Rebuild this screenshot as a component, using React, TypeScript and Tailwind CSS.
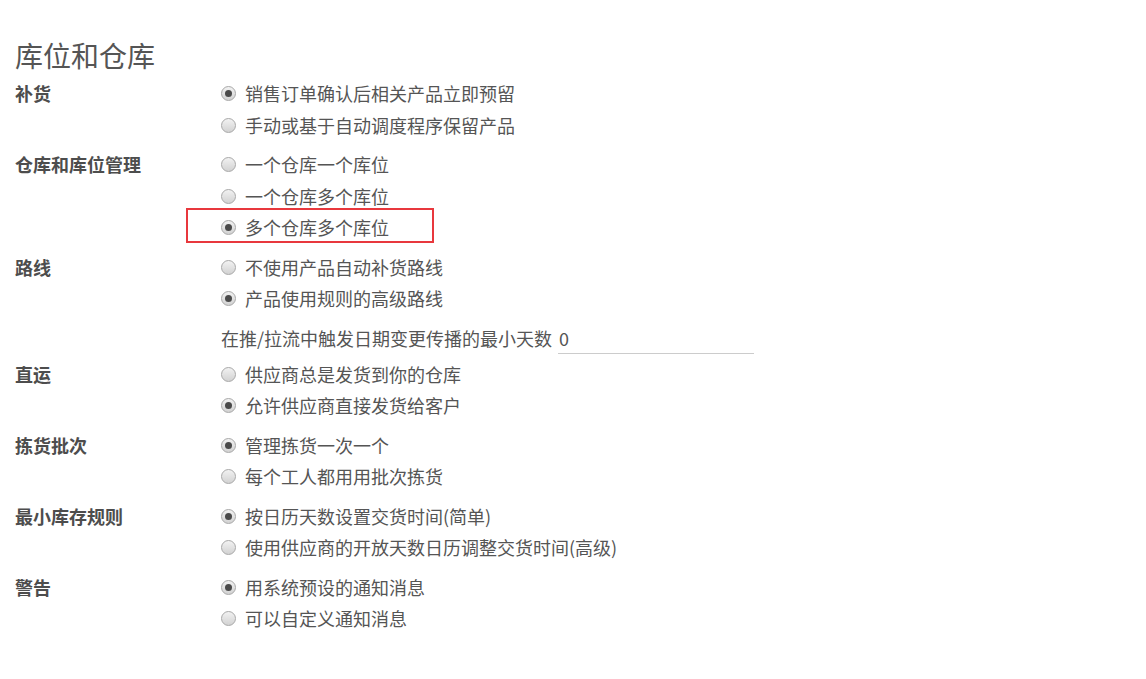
import React from "react";

const Radio = ({ checked }: { checked?: boolean }) => (
  <span className="relative inline-flex h-[15px] w-[15px] shrink-0 items-center justify-center rounded-full border border-[#a8a8a8] bg-gradient-to-b from-[#f2f2f2] to-[#d2d2d2]">
    {checked && <span className="h-[7px] w-[7px] rounded-full bg-[#4a4a4a]" />}
  </span>
);

const Option = ({ label, checked, boxed }: { label: string; checked?: boolean; boxed?: boolean }) => (
  <div className="relative flex h-[31.5px] items-center gap-[9px]">
    <Radio checked={checked} />
    <span>{label}</span>
    {boxed && (
      <div className="pointer-events-none absolute left-[-35px] top-[-4px] h-[35px] w-[248px] border-2 border-[#e8383d]" />
    )}
  </div>
);

type Group = {
  label: string;
  options: { label: string; checked?: boolean; boxed?: boolean }[];
  extra?: boolean;
};

const groups: Group[] = [
  {
    label: "补货",
    options: [
      { label: "销售订单确认后相关产品立即预留", checked: true },
      { label: "手动或基于自动调度程序保留产品" },
    ],
  },
  {
    label: "仓库和库位管理",
    options: [
      { label: "一个仓库一个库位" },
      { label: "一个仓库多个库位" },
      { label: "多个仓库多个库位", checked: true, boxed: true },
    ],
  },
  {
    label: "路线",
    options: [
      { label: "不使用产品自动补货路线" },
      { label: "产品使用规则的高级路线", checked: true },
    ],
    extra: true,
  },
  {
    label: "直运",
    options: [
      { label: "供应商总是发货到你的仓库" },
      { label: "允许供应商直接发货给客户", checked: true },
    ],
  },
  {
    label: "拣货批次",
    options: [
      { label: "管理拣货一次一个", checked: true },
      { label: "每个工人都用用批次拣货" },
    ],
  },
  {
    label: "最小库存规则",
    options: [
      { label: "按日历天数设置交货时间(简单)", checked: true },
      { label: "使用供应商的开放天数日历调整交货时间(高级)" },
    ],
  },
  {
    label: "警告",
    options: [
      { label: "用系统预设的通知消息", checked: true },
      { label: "可以自定义通知消息" },
    ],
  },
];

export default function App() {
  return (
    <div
      className="min-h-[679px] w-[1146px] bg-white px-[15px] pt-[37px] text-[18px] text-[#555]"
      style={{ fontFamily: '"Microsoft YaHei", "Noto Sans CJK SC", "Liberation Sans", sans-serif' }}
    >
      <h1 className="mb-[5px] h-[36px] text-[28px] leading-[36px] font-normal text-[#555]">库位和仓库</h1>
      <div className="flex flex-col">
        {groups.map((g) => (
          <div key={g.label} className={`flex ${g.extra ? "mb-[6px]" : "mb-2"}`}>
            <div className="w-[206px] shrink-0 leading-[31.5px] font-bold text-[#4d4d4d]">{g.label}</div>
            <div className="flex flex-col">
              {g.options.map((o) => (
                <Option key={o.label} {...o} />
              ))}
              {g.extra && (
                <div className="mt-[10px] flex h-[28px] items-center">
                  <span>在推/拉流中触发日期变更传播的最小天数</span>
                  <div className="ml-[6px] flex h-[30px] w-[196px] items-center border-b border-[#ccc] pl-[1px]">0</div>
                </div>
              )}
            </div>
          </div>
        ))}
      </div>
    </div>
  );
}
